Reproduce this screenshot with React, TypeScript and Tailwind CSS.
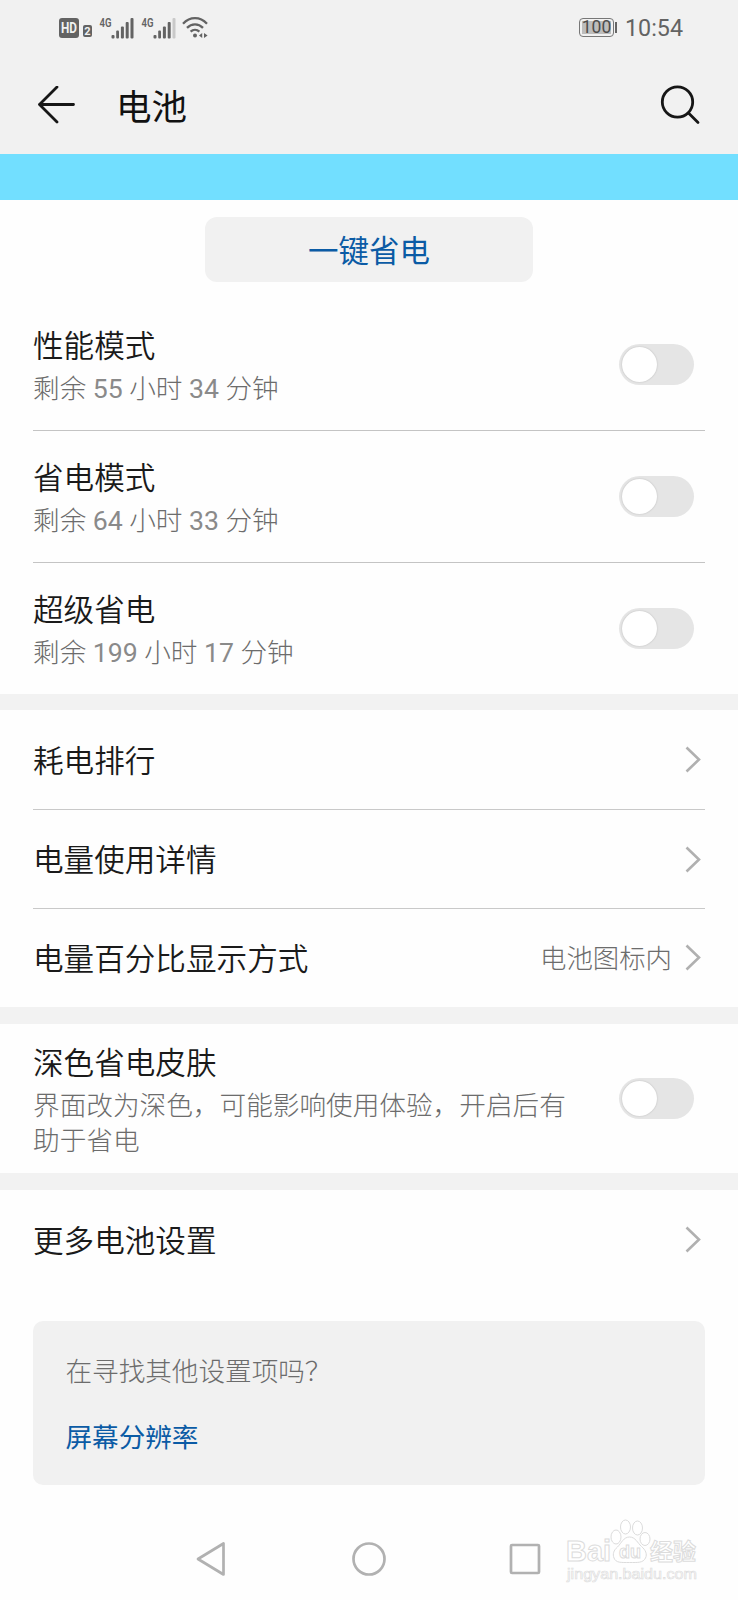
import type { ReactNode } from "react";

const modes = [
  { title: "性能模式", detail: "剩余 55 小时 34 分钟" },
  { title: "省电模式", detail: "剩余 64 小时 33 分钟" },
  { title: "超级省电", detail: "剩余 199 小时 17 分钟" },
];

const links = [
  { title: "耗电排行" },
  { title: "电量使用详情" },
  { title: "电量百分比显示方式", value: "电池图标内" },
];

function Signal({ weak = false }: { weak?: boolean }) {
  return (
    <svg width="36" height="26" viewBox="0 -4 36 26" fill="#636363">
      <text
        x="0.500"
        y="9.500"
        fontSize="13"
        fontWeight="600"
        textLength="12"
        lengthAdjust="spacingAndGlyphs"
        fontFamily="Roboto, sans-serif"
      >
        4G
      </text>
      <rect x="12.500" y="18" width="3" height="3.500" rx="1" />
      <rect x="17.200" y="13.500" width="2.800" height="8" rx="1" />
      <rect x="21.900" y="9.500" width="3" height="12" rx="1" />
      <rect x="26.700" y="5" width="3" height="16.500" rx="1" />
      <rect x="31.500" y="1" width="3" height="20.500" rx="1" fill={weak ? "#c9c9c9" : "#636363"} />
    </svg>
  );
}

function StatusBar() {
  return (
    <div className="flex h-14 items-center justify-between pl-[59px] pr-[55px] text-[#636363]">
      <div className="flex h-[22px] items-end">
        <svg className="mb-px" width="20" height="20" viewBox="0 0 20 20" fill="#f1f1f1">
          <rect width="20" height="20" rx="3" fill="#636363" />
          <text
            x="2"
            y="15"
            fontSize="14"
            fontWeight="700"
            textLength="16"
            lengthAdjust="spacingAndGlyphs"
          >
            HD
          </text>
        </svg>
        <span className="mb-[2px] ml-[4px] flex h-3 w-[9px] items-center justify-center rounded-[2px] bg-[#636363] text-[11px] font-bold leading-none text-[#f1f1f1]">
          2
        </span>
        <span className="ml-[7px]">
          <Signal />
        </span>
        <span className="ml-[6px]">
          <Signal weak />
        </span>
        <svg
          className="ml-[5px]"
          width="27"
          height="22"
          viewBox="0 0 27 22"
          fill="none"
          stroke="#636363"
          strokeWidth="2.300"
        >
          <path d="M1 6.700C8-.7 18-.7 25 6.700" />
          <path d="M5 10.900c4.600-4.600 11.400-4.600 16 0" />
          <path d="M8.600 14.700c2.600-2.400 6.200-2.400 8.800 0" />
          <circle cx="13" cy="18.500" r="2" fill="#636363" stroke="none" />
          <path d="M17 18.500l3.200-2.500v5zM22 16l3.600 2.500-3.600 2.500z" fill="#636363" stroke="none" />
        </svg>
      </div>
      <div className="flex items-center">
        <span className="flex h-[19px] w-[35px] items-center justify-center rounded-[4px] border border-[#777] p-[2px]">
          <span className="flex h-full w-full items-center justify-center bg-[#bdbdbd] text-[17.500px] leading-none text-[#4c4c4c]">
            100
          </span>
        </span>
        <span className="ml-px h-[11px] w-[2px] bg-[#666]" />
        <span className="ml-[8px] mt-[2px] text-[23.300px] leading-none">10:54</span>
      </div>
    </div>
  );
}

function Switch() {
  return (
    <span className="mr-[11px] flex h-[41px] w-[75px] shrink-0 items-center rounded-full bg-[#e5e5e5] pl-[3px]">
      <span className="size-[35px] rounded-full bg-white shadow-[0_0_2px_rgba(0,0,0,0.2)]" />
    </span>
  );
}

function Chevron() {
  return (
    <svg
      className="mr-1 shrink-0"
      width="16"
      height="27"
      viewBox="0 0 16 27"
      fill="none"
      stroke="#b0b0b0"
      strokeWidth="2.600"
    >
      <path d="M1.500 1.500 14 13.500 1.500 25.500" />
    </svg>
  );
}

// Digits are set one weight heavier than the characters around them.
function Detail({ text }: { text: string }) {
  return (
    <p className="mt-1 w-[540px] text-[26.650px] font-light leading-[35px] text-[#6c6c6c]">
      {text.split(/(\d+)/).map((part, i) =>
        i % 2 ? (
          <span key={i} className="font-normal text-[#8a8a8a]">
            {part}
          </span>
        ) : (
          part
        )
      )}
    </p>
  );
}

type RowProps = {
  title: string;
  detail?: string;
  className: string;
  children: ReactNode;
};

function Row({ title, detail, className, children }: RowProps) {
  return (
    <li className={`flex items-center justify-between ${className}`}>
      <div className="pt-[3px]">
        <p className="text-[30.600px] font-[350] leading-[43px] text-[#1a1a1a]">{title}</p>
        {detail && <Detail text={detail} />}
      </div>
      {children}
    </li>
  );
}

function Gap({ className = "h-4" }: { className?: string }) {
  return <div className={`bg-[#f2f2f2] ${className}`} />;
}

function Watermark() {
  return (
    <svg
      className="absolute bottom-0 right-0"
      width="198"
      height="100"
      viewBox="0 0 198 100"
      fill="#fff"
      stroke="#dcdcdc"
      strokeWidth="1"
      fontFamily="'Liberation Sans', 'Noto Sans CJK SC', sans-serif"
    >
      <text x="26" y="61" fontSize="29" fontWeight="700" textLength="45" lengthAdjust="spacingAndGlyphs">
        Bai
      </text>
      <ellipse cx="76" cy="37" rx="5" ry="7" />
      <ellipse cx="85.500" cy="27" rx="5" ry="7" />
      <ellipse cx="97.500" cy="28" rx="5" ry="7" />
      <ellipse cx="105" cy="39" rx="5" ry="6.500" />
      <path d="M89.500 37c-6 0-8 6-12 10-4 3.500-5 7-3.500 11 2 5 7 4.500 15.500 4.500s13.500.5 16-4.500c2-4 0-8-4-11.500-4-3.500-6-9.500-12-9.500z" />
      <text x="79" y="58" fontSize="19" fontWeight="700" textLength="22" lengthAdjust="spacingAndGlyphs">
        du
      </text>
      <text x="110" y="60" fontSize="23" fontWeight="700" textLength="46" lengthAdjust="spacingAndGlyphs">
        经验
      </text>
      <text x="27" y="79" fontSize="14" strokeWidth="0.600" textLength="130" lengthAdjust="spacingAndGlyphs">
        jingyan.baidu.com
      </text>
    </svg>
  );
}

export default function App() {
  return (
    <main className="relative h-[1600px] w-[738px] overflow-hidden bg-[#fefefe] font-[Roboto,'Noto_Sans_CJK_SC',sans-serif]">
      <header className="h-[154px] bg-[#f1f1f1]">
        <StatusBar />
        <div className="flex h-[98px] items-center pl-[37px] pr-[38px]">
          <svg
            width="39"
            height="38"
            viewBox="0 0 39 38"
            fill="none"
            stroke="#161616"
            strokeWidth="2.800"
            strokeLinecap="round"
            strokeLinejoin="round"
          >
            <path d="M20 1 2.500 18.500 20 36M2.500 18.500h34" />
          </svg>
          <h1 className="ml-[40px] mt-[5px] text-[35.500px] font-normal leading-[50px] text-[#111]">
            电池
          </h1>
          <svg
            className="ml-auto"
            width="40"
            height="40"
            viewBox="0 0 40 40"
            fill="none"
            stroke="#161616"
            strokeWidth="2.800"
            strokeLinecap="round"
          >
            <circle cx="17.500" cy="17" r="15.200" />
            <path d="M28.500 28l9.500 9.500" />
          </svg>
        </div>
      </header>

      <div className="h-[46px] bg-[#72dfff]" />

      <div className="flex h-[98px] justify-center pt-[17px]">
        <button className="h-[65px] w-[328px] rounded-xl bg-[#f1f1f1] pt-[4px] text-[30.500px] text-[#0b5ba5]">
          一键省电
        </button>
      </div>

      <ul className="mx-[33px]">
        {modes.map((mode) => (
          <Row key={mode.title} {...mode} className="h-[132px] border-[#c4c4c4] not-first:border-t">
            <Switch />
          </Row>
        ))}
      </ul>

      <Gap />

      <ul className="mx-[33px]">
        {links.map((link) => (
          <Row
            key={link.title}
            title={link.title}
            className="h-[99px] border-[#c9c9c9] not-first:border-t"
          >
            <div className="flex items-center gap-[13px] text-[26.400px] font-light text-[#6c6c6c]">
              <span className="pt-[4px]">{link.value}</span>
              <Chevron />
            </div>
          </Row>
        ))}
      </ul>

      <Gap className="h-[17px]" />

      <ul className="mx-[33px]">
        <Row
          title="深色省电皮肤"
          detail="界面改为深色，可能影响使用体验，开启后有助于省电"
          className="h-[149px]"
        >
          <Switch />
        </Row>
      </ul>

      <Gap className="h-[17px]" />

      <ul className="mx-[33px]">
        <Row title="更多电池设置" className="h-[99px]">
          <Chevron />
        </Row>
      </ul>

      <section className="mx-[33px] mt-8 flex h-[164px] flex-col gap-[26px] rounded-[10px] bg-[#f1f1f1] px-[32.500px] pt-[31px] text-[26.600px] leading-10">
        <p className="font-light text-[#6c6c6c]">在寻找其他设置项吗？</p>
        <a className="text-[#0b5ba5]">屏幕分辨率</a>
      </section>

      <nav className="mt-[56px] flex h-9 items-center pl-[195.500px]">
        <svg
          width="30"
          height="36"
          viewBox="0 0 30 36"
          fill="none"
          stroke="#b1b1b1"
          strokeWidth="2.700"
          strokeLinejoin="round"
        >
          <path d="M2 18 27.500 2.500v31z" />
        </svg>
        <svg
          className="ml-[126px]"
          width="34"
          height="34"
          viewBox="0 0 34 34"
          fill="none"
          stroke="#b1b1b1"
          strokeWidth="2.700"
        >
          <circle cx="17" cy="17" r="15.500" />
        </svg>
        <svg
          className="ml-[123.500px]"
          width="32"
          height="32"
          viewBox="0 0 32 32"
          fill="none"
          stroke="#b1b1b1"
          strokeWidth="2.700"
        >
          <rect x="2" y="2" width="28" height="28" rx="1" />
        </svg>
      </nav>

      <Watermark />
    </main>
  );
}
